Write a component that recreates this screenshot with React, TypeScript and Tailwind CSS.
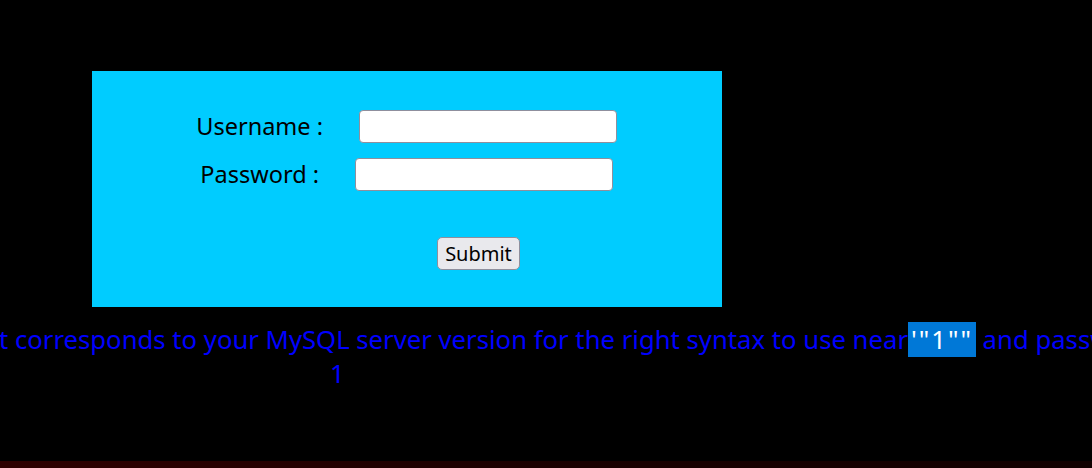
const font = { fontFamily: '"Noto Sans", "Open Sans", sans-serif' };

const App = () => {
  return (
    <div
      className="w-[1092px] h-[468px] bg-black overflow-hidden relative"
      style={font}
    >
      <div className="ml-[92px] mt-[71px] w-[630px] h-[236px] bg-[#00ccff] pt-[39px]">
        <div className="flex items-center h-[33px]">
          <label className="w-[231px] text-right text-[23.5px] text-black leading-none">
            Username :
          </label>
          <input
            type="text"
            className="ml-[36px] w-[258px] h-[33px] bg-white border border-[#8f8f9d] rounded-[4px]"
          />
        </div>
        <div className="flex items-center h-[33px] mt-[15px]">
          <label className="w-[227px] text-right text-[23.5px] text-black leading-none">
            Password :
          </label>
          <input
            type="password"
            className="ml-[36px] w-[258px] h-[33px] bg-white border border-[#8f8f9d] rounded-[4px]"
          />
        </div>
        <button className="ml-[345px] mt-[46px] w-[83px] h-[33px] bg-[#e9e9ed] border border-[#8f8f9d] rounded-[5px] text-[20px] text-black leading-none">
          Submit
        </button>
      </div>

      <div className="mt-[16px] text-[#0000ff] text-[25.7px] leading-[34px]">
        <div className="whitespace-nowrap -ml-[1px]">
          t corresponds to your MySQL server version for the right syntax to use near
          <span className="bg-[#0078d7] text-white px-[3px] tracking-[2px]">'"1""</span> and passw
        </div>
        <div className="pl-[330px]">1</div>
      </div>

      <div className="absolute left-0 bottom-0 w-full h-[7px] bg-gradient-to-r from-[#3a0000] via-[#200000] to-[#150000] opacity-80" />
    </div>
  );
};

export default App;
